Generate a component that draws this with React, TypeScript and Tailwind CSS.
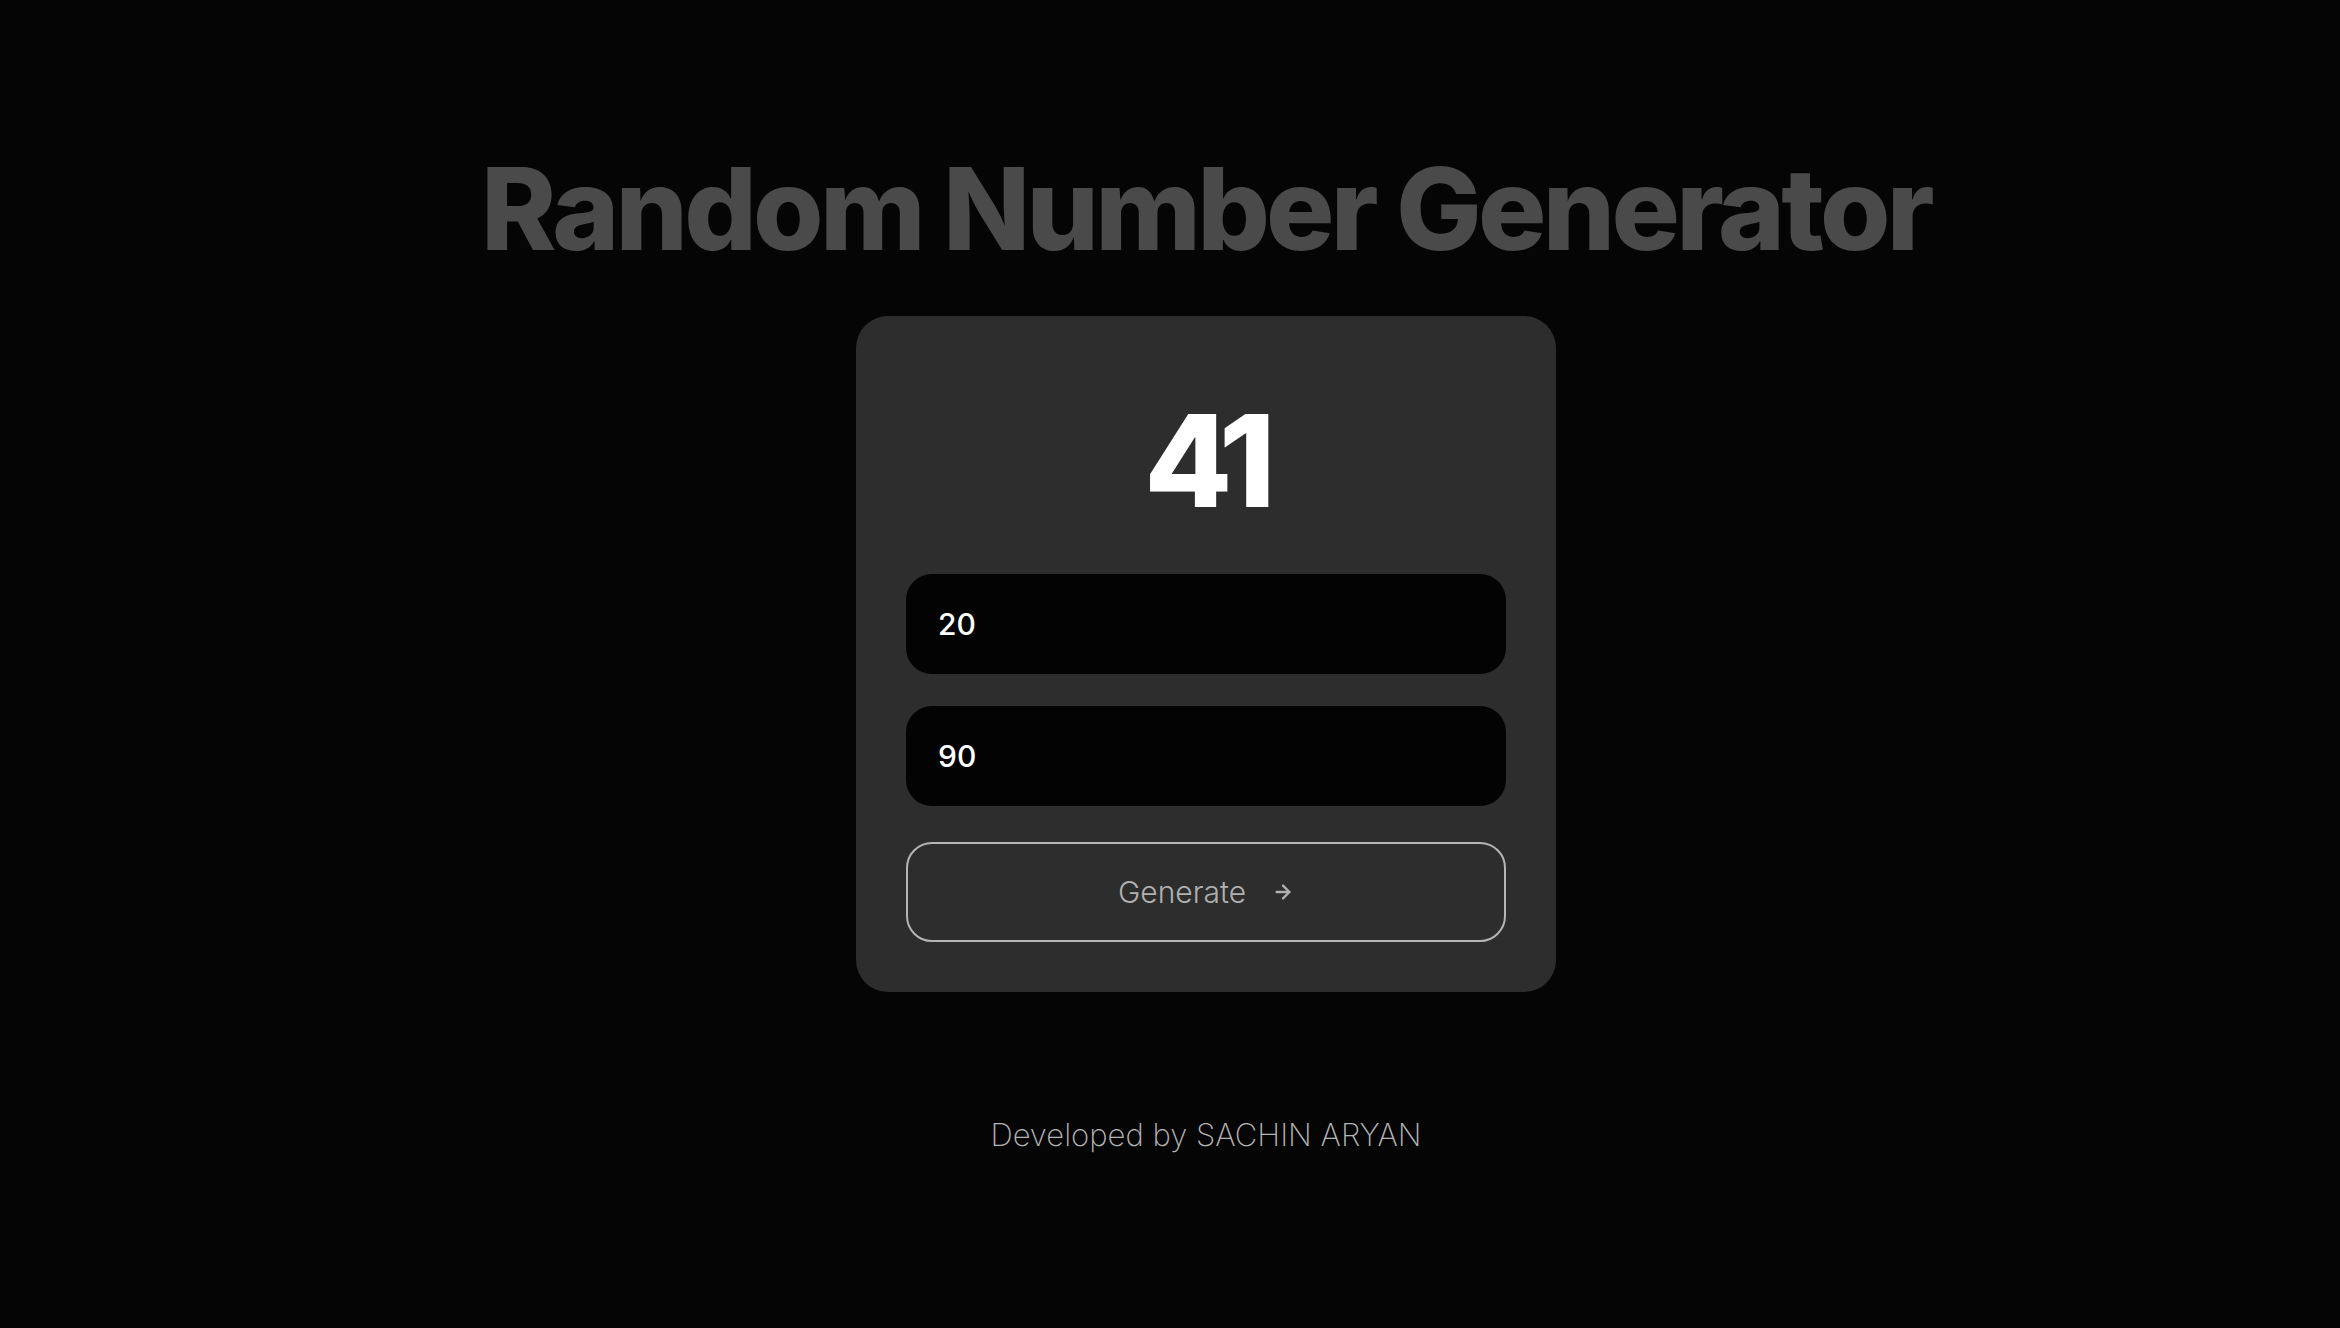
import { ArrowRight } from "lucide-react";

export default function App() {
  return (
    <div
      className="min-h-screen w-full bg-[#050505] flex flex-col items-center pl-[72px] pt-[152px]"
      style={{ fontFamily: "Inter, 'Noto Sans', sans-serif" }}
    >
      <h1 className="text-[114px] leading-none font-extrabold tracking-[-0.033em] text-[#4a4a4a]">
        Random Number Generator
      </h1>

      <div className="mt-[50px] w-[700px] rounded-[32px] bg-[#2d2d2d] p-[50px] flex flex-col">
        <div className="mt-[31px] text-center text-[128px] leading-none font-extrabold tracking-[-0.06em] text-white">
          41
        </div>

        <input
          defaultValue="20"
          className="mt-[49px] h-[100px] w-full rounded-[26px] bg-[#030303] px-[32px] text-[30px] font-medium text-white outline-none"
        />
        <input
          defaultValue="90"
          className="mt-[32px] h-[100px] w-full rounded-[26px] bg-[#030303] px-[32px] text-[30px] font-medium text-white outline-none"
        />

        <button className="mt-[36px] h-[100px] w-full rounded-[26px] border-2 border-[#b5b5b5] bg-transparent flex items-center justify-center gap-[26px] text-[30px] font-light text-[#b0b0b0]">
          <span>Generate</span>
          <ArrowRight className="w-[22px] h-[22px]" strokeWidth={2.5} />
        </button>
      </div>

      <p className="mt-[127px] text-[31px] leading-none font-extralight text-[#b5b5b5]">
        Developed by SACHIN ARYAN
      </p>
    </div>
  );
}
